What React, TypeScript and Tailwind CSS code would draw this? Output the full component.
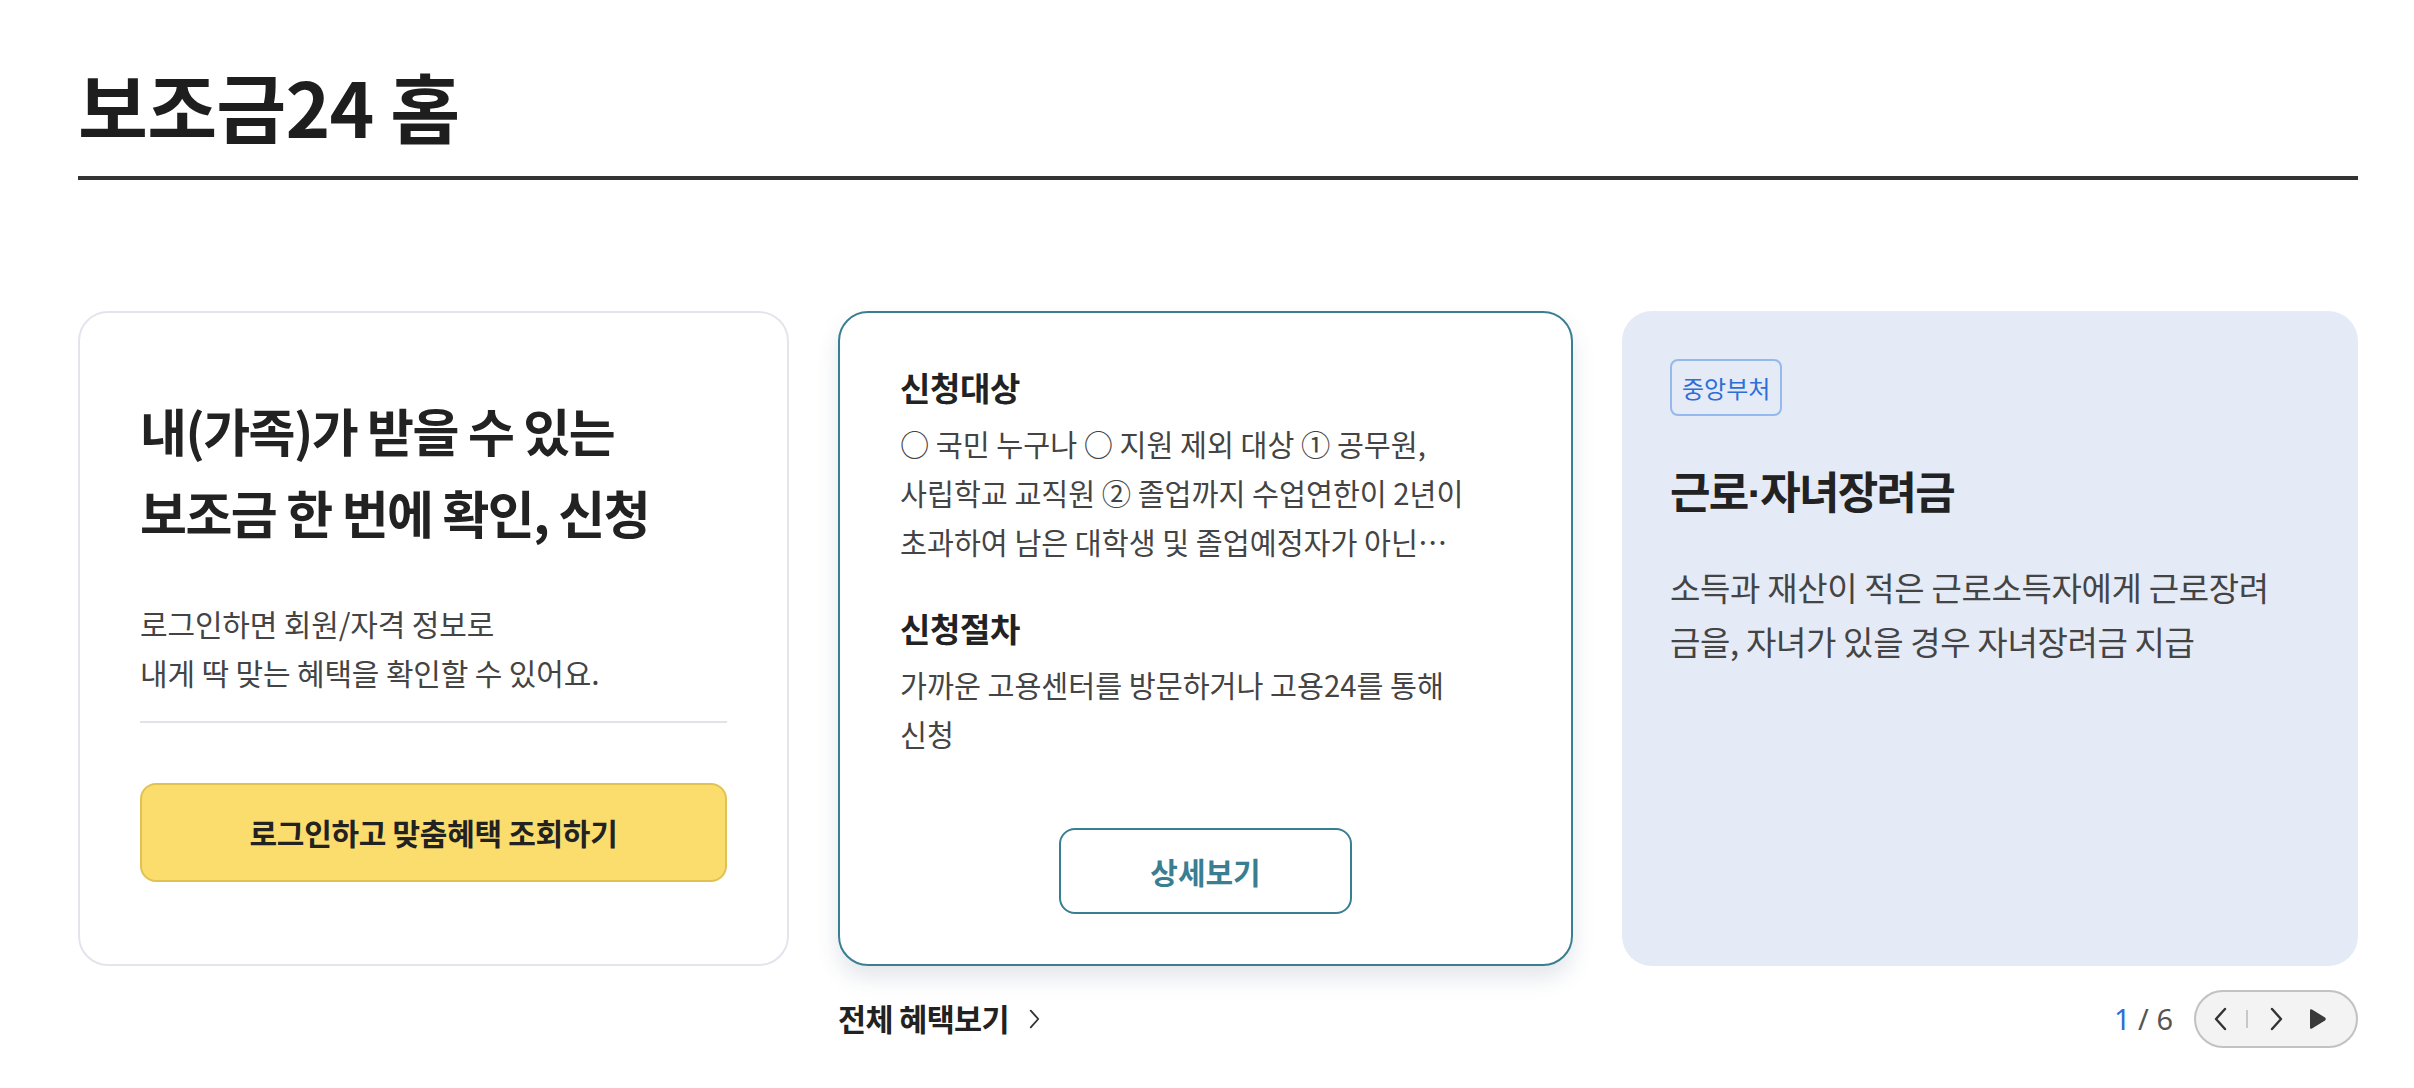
import React from "react";

function ChevronLeft() {
  return (
    <svg width="13" height="24" viewBox="0 0 13 24" fill="none">
      <path d="M11 2 L2 12 L11 22" stroke="#333" strokeWidth="2.4" strokeLinecap="round" strokeLinejoin="round" />
    </svg>
  );
}

function ChevronRight({ w = 13, h = 24, color = "#333", sw = 2.4 }: { w?: number; h?: number; color?: string; sw?: number }) {
  return (
    <svg width={w} height={h} viewBox="0 0 13 24" fill="none">
      <path d="M2 2 L11 12 L2 22" stroke={color} strokeWidth={sw} strokeLinecap="round" strokeLinejoin="round" />
    </svg>
  );
}

function Play() {
  return (
    <svg width="20" height="24" viewBox="0 0 20 24">
      <path d="M3 3.5 Q3 1.5 5 2.6 L18 10.6 Q19.6 12 18 13.4 L5 21.4 Q3 22.5 3 20.5 Z" fill="#3a3a3a" />
    </svg>
  );
}

export default function App() {
  return (
    <div className="min-h-screen bg-white font-['Noto_Sans_CJK_KR','Noto_Sans',sans-serif] text-[#222]">
      <div className="ml-[78px] w-[2280px] pt-[65px]">
        <h1 className="border-b-4 border-[#333] pb-[31px] text-[76px] font-bold leading-[80px] tracking-[-0.01em] text-[#1e1e1e]">
          보조금24 홈
        </h1>

        <div className="mt-[131px] flex h-[655px] gap-[49px]">
          {/* Card 1 */}
          <div className="flex w-[711px] min-w-0 shrink-0 flex-col rounded-[30px] border-2 border-[#e4e4ec] bg-white px-[60px] pt-[76px]">
            <h2 className="text-[51px] font-bold leading-[82px] tracking-[-0.03em] text-[#222]">
              내(가족)가 받을 수 있는
              <br />
              보조금 한 번에 확인, 신청
            </h2>
            <p className="mt-[46px] text-[30px] leading-[49px] tracking-[-0.005em] text-[#444]">
              로그인하면 회원/자격 정보로
              <br />
              내게 딱 맞는 혜택을 확인할 수 있어요.
            </p>
            <div className="mt-[24px] h-[2px] bg-[#e2e2e8]" />
            <button className="mt-[60px] h-[99px] w-full rounded-[16px] border-2 border-[#e0c254] bg-[#fbdd6d] text-[30px] font-bold tracking-[-0.01em] text-[#222]">
              로그인하고 맞춤혜택 조회하기
            </button>
          </div>

          {/* Card 2 */}
          <div className="flex w-[735px] min-w-0 shrink-0 flex-col rounded-[30px] border-2 border-[#3a7e92] bg-white pb-[50px] pl-[60px] pr-[90px] pt-[51px] shadow-[0_12px_22px_rgba(40,60,100,0.13)]">
            <h3 className="text-[33px] font-bold leading-[46px] tracking-[-0.01em] text-[#222]">신청대상</h3>
            <p className="mt-[9px] line-clamp-3 break-keep text-[29.3px] leading-[49px] text-[#444]">
              ○ 국민 누구나 ○ 지원 제외 대상 ① 공무원, 사립학교 교직원 ② 졸업까지 수업연한이 2년이 초과하여 남은 대학생 및 졸업예정자가 아닌 대학원생(휴학생 포함) ③ 기타 지원이 부적절하다고 인정되는 자
            </p>
            <h3 className="mt-[39px] text-[33px] font-bold leading-[46px] tracking-[-0.01em] text-[#222]">신청절차</h3>
            <p className="mt-[9px] break-keep text-[29.3px] leading-[49px] text-[#444]">
              가까운 고용센터를 방문하거나 고용24를 통해 신청
            </p>
            <button className="mt-auto h-[86px] w-[293px] translate-x-[15px] self-center rounded-[16px] border-2 border-[#3a7e92] bg-white text-[30px] font-bold text-[#3a7e92]">
              상세보기
            </button>
          </div>

          {/* Card 3 */}
          <div className="flex min-w-0 flex-1 flex-col items-start rounded-[30px] bg-[#e4eaf6] pl-[48px] pr-[66px] pt-[48px]">
            <span className="inline-flex h-[57px] items-center rounded-[8px] border-2 border-[#93b9ee] px-[10px] text-[24px] text-[#2c6fd6]">
              중앙부처
            </span>
            <h3 className="mt-[46px] text-[44px] font-bold leading-[56px] tracking-[-0.04em] text-[#222]">
              근로<span className="font-['Liberation_Sans',sans-serif]">·</span>자녀장려금
            </h3>
            <p className="mt-[38px] text-[33px] leading-[54px] tracking-[-0.01em] text-[#444]">
              소득과 재산이 적은 근로소득자에게 근로장려금을, 자녀가 있을 경우 자녀장려금 지급
            </p>
          </div>
        </div>

        <div className="mt-[24px] flex h-[58px] items-center">
          <div className="w-[760px] shrink-0" />
          <a className="flex items-center gap-[20px] text-[30.5px] font-bold tracking-[-0.02em] text-[#222]">
            전체 혜택보기
            <ChevronRight w={11} h={20} color="#333" sw={2.2} />
          </a>
          <div className="ml-auto flex items-center gap-[21px]">
            <div className="text-[29px] font-['Noto_Sans',sans-serif] text-[#555]">
              <span className="text-[#2c6fd6]">1</span> / 6
            </div>
            <div className="flex h-[58px] w-[164px] items-center rounded-full border-2 border-[#c2c2c2] bg-[#f3f3f3] pl-[18px]">
              <ChevronLeft />
              <span className="ml-[19px] h-[18px] w-[2px] bg-[#c8c8c8]" />
              <span className="ml-[22px]">
                <ChevronRight />
              </span>
              <span className="ml-[24px]">
                <Play />
              </span>
            </div>
          </div>
        </div>
      </div>
    </div>
  );
}
